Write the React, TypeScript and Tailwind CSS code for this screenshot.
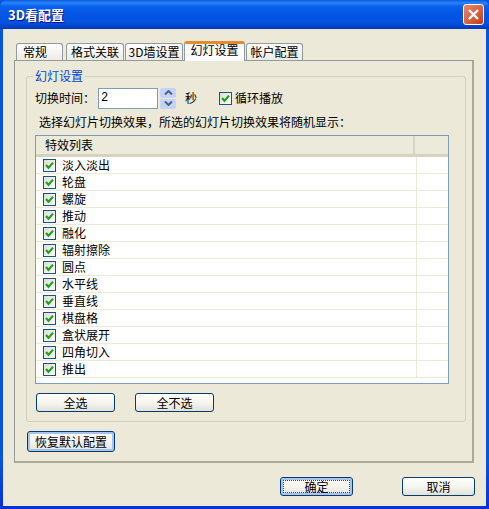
import React from "react";

const effects = ["淡入淡出","轮盘","螺旋","推动","融化","辐射擦除","圆点","水平线","垂直线","棋盘格","盒状展开","四角切入","推出"];

function Check() {
  return (
    <span className="flex-none w-[13px] h-[13px] border border-[#1c5180] bg-gradient-to-br from-[#dcdcd7] to-white flex items-center justify-center">
      <svg width="9" height="9" viewBox="0 0 9 9"><path d="M1 4 L3.5 6.8 L8 1.6" fill="none" stroke="#21a121" strokeWidth="2.2" /></svg>
    </span>
  );
}

function XpButton({ label, cls = "", focus = false, dotted = false }: { label: string; cls?: string; focus?: boolean; dotted?: boolean }) {
  return (
    <button className={`flex-none border border-[#003c74] rounded-[3px] bg-gradient-to-b from-white via-[#f5f4ee] to-[#e3e2da] text-[12px] leading-none text-black flex items-center justify-center ${focus ? "shadow-[inset_0_0_0_2px_#a9c4ec]" : ""} ${cls}`}>
      <span className={dotted ? "flex-1 self-stretch m-[2px] border border-dotted border-[#444] flex items-center justify-center" : ""}>{label}</span>
    </button>
  );
}

function Tab({ label, cls, active = false }: { label: string; cls: string; active?: boolean }) {
  return active ? (
    <div className={`${cls} h-[20px] -mb-px z-10 bg-[#fcfcfe] border-x border-[#919b9c] border-t-[3px] border-t-[#e68b2c] rounded-t-[3px] flex items-center justify-center text-[12px] leading-none pb-[5px]`}>{label}</div>
  ) : (
    <div className={`${cls} h-[17px] bg-gradient-to-b from-white to-[#ecebe5] border border-b-0 border-[#919b9c] rounded-t-[3px] flex items-center text-[12px] leading-none pb-[1px]`}>{label}</div>
  );
}

export default function App() {
  return (
    <div className="w-[489px] h-[509px] overflow-hidden flex flex-col bg-[linear-gradient(180deg,#0855dd_0%,#0855dd_90%,#0831d9_100%)] text-black text-[12px] [font-family:'Noto_Sans_CJK_SC','Liberation_Sans',sans-serif]">
      <div className="h-[29px] flex-none flex items-center justify-between pl-[8px] pr-[5px] rounded-t-[7px] bg-[linear-gradient(180deg,#0a5ad8_0px,#2a85ff_3px,#0a62ee_6px,#0355e3_14px,#0452e0_22px,#0246d0_26px,#0238b8_29px)]">
        <span className="text-white font-bold text-[13px] leading-none [text-shadow:1px_1px_0_#0f1089]">3D看配置</span>
        <span className="w-[21px] h-[21px] rounded-[3px] border border-white bg-gradient-to-br from-[#e8886a] to-[#c9380f] flex items-center justify-center">
          <svg width="13" height="13" viewBox="0 0 13 13"><path d="M2 2 L11 11 M11 2 L2 11" stroke="#fff" strokeWidth="2.4" /></svg>
        </span>
      </div>
      <div className="flex-1 mx-[3px] mb-[3px] bg-[#ece9d8] flex flex-col pl-[11px] pr-[12px] pt-[11px]">
        <div className="flex items-end h-[20px] pl-[2px] gap-[1px] z-10">
          <Tab label="常规" cls="w-[47px] mr-[2px] pl-[6px]" />
          <Tab label="格式关联" cls="w-[58px] justify-center" />
          <Tab label="3D墙设置" cls="w-[58px] justify-center" />
          <Tab label="幻灯设置" cls="w-[61px]" active />
          <Tab label="帐户配置" cls="w-[57px] justify-center" />
        </div>
        <div className="w-[460px] h-[403px] flex-none border border-[#919b9c] border-r-[2px] border-r-[#aca899] border-b-[2px] border-b-[#aca899] pl-[11px] pt-[8px]">
          <fieldset className="w-[440px] h-[353px] border border-[#d0d0bf] rounded-[3px] pl-[8px] m-0">
            <legend className="ml-[-2px] px-[2px] text-[#0046d5] text-[12px] leading-[14px]">幻灯设置</legend>
            <div className="flex items-center h-[22px] mt-[4px]">
              <span className="w-[63px] leading-none">切换时间：</span>
              <input readOnly value="2" className="w-[60px] h-[21px] border border-[#7f9db9] bg-white pl-[2px] text-[12px] outline-none [font-family:'Liberation_Mono',monospace]" />
              <span className="ml-[2px] w-[16px] h-[21px] flex flex-col gap-[1px]">
                <span className="h-[10px] rounded-[2px] bg-[#c5d3f6] flex items-center justify-center">
                  <svg width="9" height="5" viewBox="0 0 9 5"><path d="M1 4.5 L4.5 1 L8 4.5" fill="none" stroke="#4d6185" strokeWidth="2" /></svg>
                </span>
                <span className="h-[10px] rounded-[2px] bg-[#c5d3f6] flex items-center justify-center">
                  <svg width="9" height="5" viewBox="0 0 9 5"><path d="M1 .5 L4.5 4 L8 .5" fill="none" stroke="#4d6185" strokeWidth="2" /></svg>
                </span>
              </span>
              <span className="ml-[9px] w-[34px] leading-none">秒</span>
              <Check />
              <span className="ml-[3px] leading-none">循环播放</span>
            </div>
            <p className="mt-[6px] ml-[4px] h-[14px] leading-[14px] text-[12px]">选择幻灯片切换效果，所选的幻灯片切换效果将随机显示：</p>
            <div className="w-[414px] h-[249px] mt-[6px] border border-[#7f9db9] bg-white flex flex-col">
              <div className="h-[21px] flex-none flex bg-[#ebeadb] border-b-[3px] border-b-[#d5d2c0]">
                <span className="w-[379px] pl-[9px] leading-[18px] text-[12px] border-r-2 border-r-[#d6d3c3]">特效列表</span>
              </div>
              {effects.map((e) => (
                <div key={e} className="h-[17px] flex-none flex border-b border-[#ece9d8]">
                  <span className="w-[381px] flex items-center pl-[7px] gap-[6px] border-r border-[#ece9d8] leading-none text-[12px]">
                    <Check />
                    {e}
                  </span>
                </div>
              ))}
            </div>
            <div className="flex gap-[20px] mt-[9px] ml-[1px]">
              <XpButton label="全选" cls="w-[79px] h-[19px]" />
              <XpButton label="全不选" cls="w-[79px] h-[19px]" />
            </div>
          </fieldset>
          <XpButton label="恢复默认配置" cls="w-[88px] h-[21px] mt-[9px] ml-[1px]" focus />
        </div>
        <div className="flex justify-end gap-[49px] mt-[14px] mr-[-1px]">
          <XpButton label="确定" cls="w-[73px] h-[19px]" focus dotted />
          <XpButton label="取消" cls="w-[73px] h-[19px]" />
        </div>
      </div>
    </div>
  );
}
